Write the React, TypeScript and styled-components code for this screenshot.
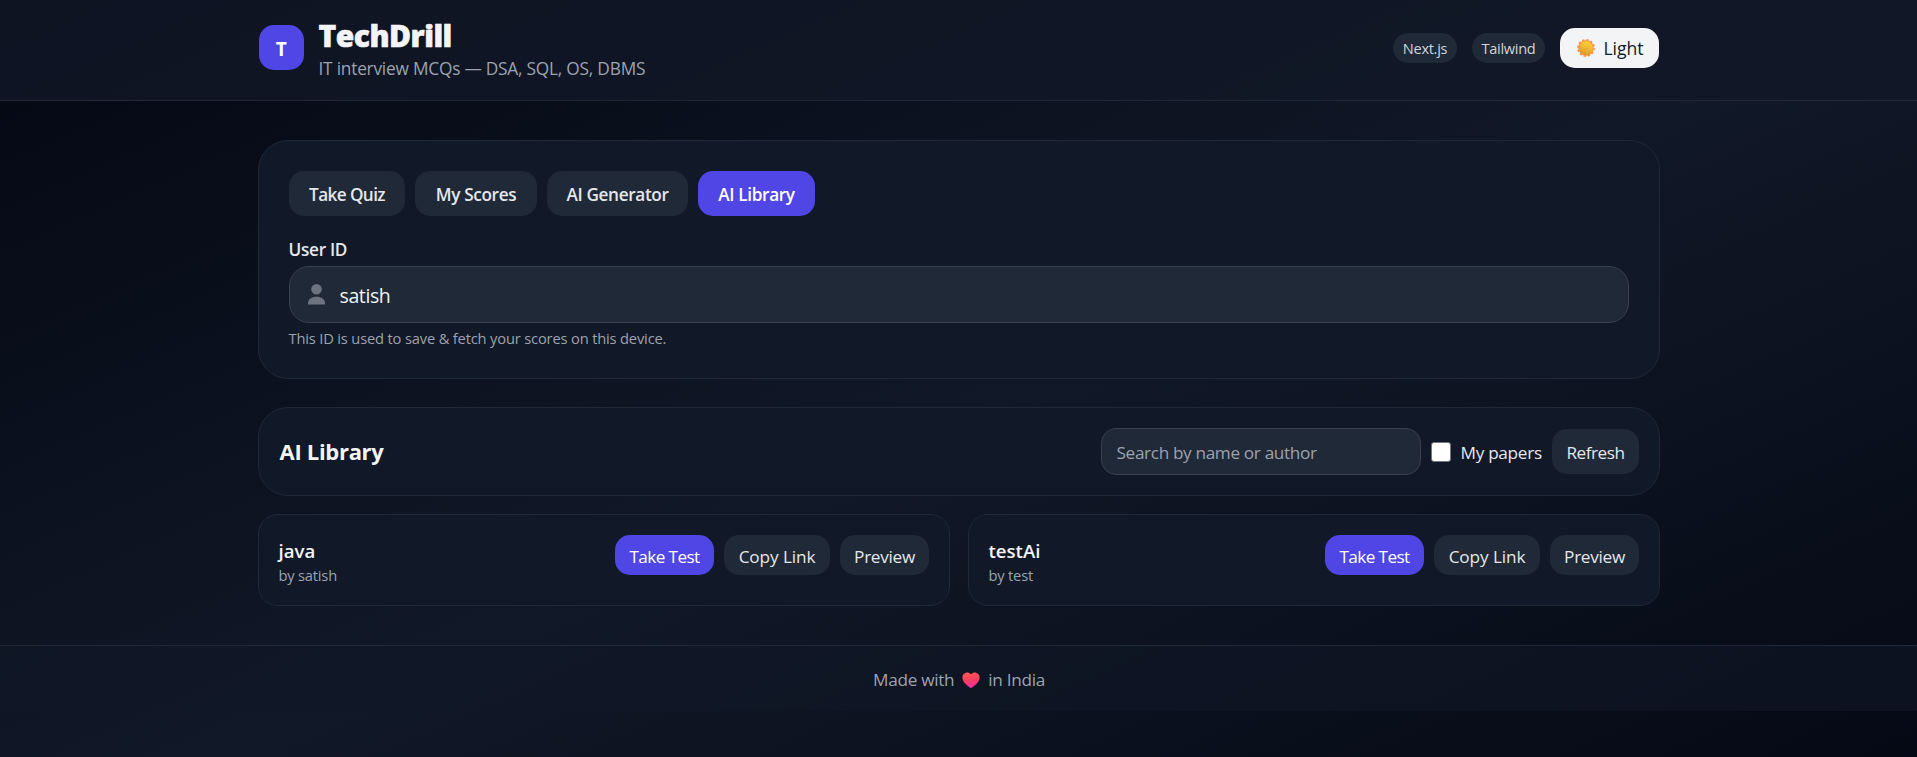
import React, { useState } from "react";
import styled, { createGlobalStyle } from "styled-components";

const GlobalStyle = createGlobalStyle`
  *, *::before, *::after { box-sizing: border-box; }
  body {
    margin: 0;
    background: #030712;
    color: #f3f4f6;
    font-family: "Open Sans", "Noto Sans", sans-serif;
    font-size: 17.2px;
    letter-spacing: -0.3px;
  }
  h1, h2, h3, p { margin: 0; }
  button, input { font: inherit; color: inherit; letter-spacing: inherit; }
`;

const Page = styled.div`
  min-height: 100vh;
  background: linear-gradient(to bottom right, #030712, #111827, #030712) 0 0 / 100% 850px no-repeat;
`;

const Header = styled.header`
  height: 101px;
  background: rgba(17, 24, 39, 0.8);
  border-bottom: 1px solid #1f2937;
`;

const HeaderInner = styled.div`
  width: 1400px;
  height: 95px;
  margin: 0 auto;
  display: flex;
  align-items: center;
  justify-content: space-between;
`;

const Brand = styled.div`
  display: flex;
  align-items: center;
  gap: 15px;
`;

const Logo = styled.div`
  width: 45px;
  height: 45px;
  border-radius: 15px;
  background: #4f46e5;
  color: #fff;
  display: grid;
  place-items: center;
  padding-top: 2px;
  font-size: 19px;
  font-weight: 700;
`;

const Title = styled.h1`
  padding-top: 7px;
  font-size: 30px;
  font-weight: 800;
  line-height: 34px;
  letter-spacing: -0.5px;
  -webkit-text-stroke: 0.6px currentColor;
`;

const Tagline = styled.p`
  font-size: 17.3px;
  line-height: 31px;
  color: #9ca3af;
  letter-spacing: -0.22px;
`;

const HeaderActions = styled.div`
  display: flex;
  align-items: center;
  gap: 15px;
`;

const Pill = styled.span<{ $w: number }>`
  width: ${(p) => p.$w}px;
  height: 30px;
  padding: 1px 0 0 1px;
  border-radius: 15px;
  background: #1f2937;
  color: #d1d5db;
  font-size: 14.6px;
  line-height: 29px;
  text-align: center;
`;

const ThemeButton = styled.button`
  width: 99px;
  height: 40px;
  padding: 1px 0 0 3px;
  border: 0;
  border-radius: 15px;
  background: #f3f4f6;
  color: #111827;
  font-size: 17.6px;
  font-weight: 500;
  letter-spacing: 0;
  display: flex;
  align-items: center;
  justify-content: center;
  gap: 8px;
`;

const Main = styled.main`
  width: 1402px;
  margin: 0 auto;
  padding: 39px 0 39px;
  display: flex;
  flex-direction: column;
`;

const Card = styled.section`
  background: #111827;
  border: 1px solid #1f2937;
  border-radius: 30px;
`;

const ProfileCard = styled(Card)`
  height: 239px;
  padding: 30px;
`;

const Tabs = styled.nav`
  display: flex;
  gap: 10px;
`;

const Tab = styled.button<{ $active?: boolean; $w: number; $tracking?: number }>`
  width: ${(p) => p.$w}px;
  height: 45px;
  padding: 2px 0 0 1px;
  border: 0;
  border-radius: 15px;
  background: ${(p) => (p.$active ? "#4f46e5" : "#1f2937")};
  color: ${(p) => (p.$active ? "#ffffff" : "#e5e7eb")};
  font-weight: 600;
  letter-spacing: ${(p) => p.$tracking ?? -0.35}px;
  white-space: nowrap;
`;

const Label = styled.label`
  display: block;
  margin-top: 21px;
  height: 29px;
  line-height: 26px;
  font-weight: 600;
  color: #e5e7eb;
`;

const UserField = styled.div`
  height: 57px;
  padding: 0 18px;
  border: 1px solid #374151;
  border-radius: 20px;
  background: #1f2937;
  display: flex;
  align-items: center;
  gap: 15px;
`;

const UserInput = styled.input`
  flex: 1;
  padding: 2px 0 0;
  border: 0;
  outline: 0;
  background: transparent;
  font-size: 19.5px;
  letter-spacing: -0.4px;
`;

const Hint = styled.p`
  margin-top: 4px;
  font-size: 14.7px;
  line-height: 22px;
  color: #9ca3af;
  letter-spacing: -0.17px;
`;

const LibraryBar = styled(Card)`
  height: 89px;
  margin-top: 28px;
  padding: 0 20px;
  display: flex;
  align-items: center;
  justify-content: space-between;
`;

const LibraryTitle = styled.h2`
  padding: 0 0 2px 1px;
  font-size: 22px;
  font-weight: 700;
  line-height: 30px;
`;

const Filters = styled.div`
  display: flex;
  align-items: center;
  gap: 10px;
`;

const Search = styled.input`
  width: 320px;
  height: 47px;
  padding: 2px 15px 0;
  border: 1px solid #374151;
  border-radius: 15px;
  outline: 0;
  background: #1f2937;
  letter-spacing: -0.35px;
  &::placeholder { color: #9ca3af; opacity: 1; }
`;

const MineToggle = styled.label`
  width: 111px;
  display: flex;
  align-items: center;
  gap: 10px;
  color: #e5e7eb;
  white-space: nowrap;
`;

const ToggleText = styled.span`
  padding-top: 2px;
`;

const Checkbox = styled.input`
  appearance: none;
  width: 20px;
  height: 20px;
  margin: 0;
  flex: none;
  border: 1px solid #767676;
  border-radius: 3px;
  background: #fff;
`;

const Action = styled.button<{ $w: number; $h?: number; $primary?: boolean; $tracking?: number }>`
  width: ${(p) => p.$w}px;
  height: ${(p) => p.$h ?? 40}px;
  padding: 2px 0 0 1px;
  border: 0;
  border-radius: 15px;
  background: ${(p) => (p.$primary ? "#4f46e5" : "#1f2937")};
  color: ${(p) => (p.$primary ? "#ffffff" : "#e5e7eb")};
  letter-spacing: ${(p) => p.$tracking ?? -0.3}px;
  white-space: nowrap;
`;

const Papers = styled.div`
  margin-top: 18px;
  display: grid;
  grid-template-columns: 1fr 1fr;
  gap: 18px;
`;

const PaperCard = styled(Card)`
  height: 92px;
  padding: 20px;
  border-radius: 20px;
  display: flex;
  justify-content: space-between;
`;

const PaperName = styled.h3`
  margin-top: 2px;
  font-size: 18.6px;
  font-weight: 600;
  line-height: 28px;
  letter-spacing: 0;
`;

const PaperAuthor = styled.p`
  font-size: 14.7px;
  line-height: 21px;
  color: #9ca3af;
  letter-spacing: -0.2px;
`;

const Actions = styled.div`
  display: flex;
  gap: 10px;
`;

const Footer = styled.footer`
  height: 66px;
  padding: 2px 0 0 1px;
  border-top: 1px solid #1f2937;
  background: rgba(17, 24, 39, 0.6);
  color: #9ca3af;
  display: flex;
  align-items: center;
  justify-content: center;
  gap: 8px;

  svg { margin-top: 2px; }
`;

const SunIcon = () => (
  <svg width="18" height="18" viewBox="0 0 18 18">
    <defs>
      <linearGradient id="sunFace" x1="0.7" y1="0" x2="0.3" y2="1">
        <stop offset="0" stopColor="#ffd43b" />
        <stop offset="1" stopColor="#d99a2b" />
      </linearGradient>
    </defs>
    <circle cx="9" cy="9" r="7.7" fill="#f5923e" />
    <circle cx="9" cy="9" r="8.1" fill="none" stroke="#f5923e" strokeWidth="1.6" strokeDasharray="2.4 1.84" />
    <circle cx="9" cy="9" r="6.8" fill="url(#sunFace)" />
  </svg>
);

const HeartIcon = () => (
  <svg width="18" height="17" viewBox="0 0 18 17">
    <defs>
      <linearGradient id="heartFill" x1="0.4" y1="0" x2="0.6" y2="1">
        <stop offset="0" stopColor="#ff5a55" />
        <stop offset="0.5" stopColor="#fb3c5f" />
        <stop offset="1" stopColor="#f52bb0" />
      </linearGradient>
    </defs>
    <path
      d="M9 2.6C7.6.7 5.6.3 4 .7 1.600 1.200.3 3.200.4 5.600.5 9.800 4.500 13.300 7.900 15.600c.7.5 1.500.5 2.200 0 3.400-2.300 7.400-5.800 7.500-10C17.700 3.200 16.400 1.200 14 .7 12.400.3 10.400.7 9 2.600z"
      fill="url(#heartFill)"
    />
  </svg>
);

const UserIcon = () => (
  <svg width="17" height="21" viewBox="0 0 17 21" fill="#6b7280">
    <circle cx="8.500" cy="5.300" r="5.300" />
    <path d="M0 20.500v-1.500c0-3.500 3.600-6.200 8.500-6.200s8.500 2.700 8.500 6.200v1.500z" />
  </svg>
);

const tabs = [
  { name: "Take Quiz", w: 116, tracking: -0.6 },
  { name: "My Scores", w: 122 },
  { name: "AI Generator", w: 141 },
  { name: "AI Library", w: 117 },
];

const papers = [
  { name: "java", author: "satish" },
  { name: "testAi", author: "test" },
];

export default function App() {
  const [tab, setTab] = useState("AI Library");
  const [user, setUser] = useState("satish");

  return (
    <Page>
      <GlobalStyle />
      <Header>
        <HeaderInner>
          <Brand>
            <Logo>T</Logo>
            <div>
              <Title>TechDrill</Title>
              <Tagline>IT interview MCQs — DSA, SQL, OS, DBMS</Tagline>
            </div>
          </Brand>
          <HeaderActions>
            <Pill $w={64}>Next.js</Pill>
            <Pill $w={73}>Tailwind</Pill>
            <ThemeButton>
              <SunIcon />
              Light
            </ThemeButton>
          </HeaderActions>
        </HeaderInner>
      </Header>
      <Main>
        <ProfileCard>
          <Tabs>
            {tabs.map((t) => (
              <Tab
                key={t.name}
                $w={t.w}
                $tracking={t.tracking}
                $active={t.name === tab}
                onClick={() => setTab(t.name)}
              >
                {t.name}
              </Tab>
            ))}
          </Tabs>
          <Label htmlFor="user">User ID</Label>
          <UserField>
            <UserIcon />
            <UserInput id="user" value={user} onChange={(e) => setUser(e.target.value)} />
          </UserField>
          <Hint>This ID is used to save &amp; fetch your scores on this device.</Hint>
        </ProfileCard>
        <LibraryBar>
          <LibraryTitle>AI Library</LibraryTitle>
          <Filters>
            <Search placeholder="Search by name or author" />
            <MineToggle>
              <Checkbox type="checkbox" />
              <ToggleText>My papers</ToggleText>
            </MineToggle>
            <Action $w={87} $h={45} $tracking={-0.5}>Refresh</Action>
          </Filters>
        </LibraryBar>
        <Papers>
          {papers.map((p) => (
            <PaperCard key={p.name}>
              <div>
                <PaperName>{p.name}</PaperName>
                <PaperAuthor>by {p.author}</PaperAuthor>
              </div>
              <Actions>
                <Action $w={99} $primary $tracking={-0.6}>Take Test</Action>
                <Action $w={106} $tracking={-0.1}>Copy Link</Action>
                <Action $w={89}>Preview</Action>
              </Actions>
            </PaperCard>
          ))}
        </Papers>
      </Main>
      <Footer>
        <span>Made with</span>
        <HeartIcon />
        <span>in India</span>
      </Footer>
    </Page>
  );
}
